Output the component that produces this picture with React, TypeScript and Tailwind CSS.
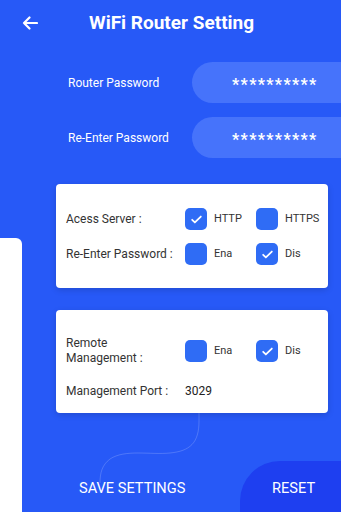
import { type ReactNode } from 'react'

const font = { fontFamily: 'Roboto, "Liberation Sans", sans-serif' }

function Box({ checked }: { checked?: boolean }) {
  return (
    <span className="flex h-[22px] w-[22px] shrink-0 items-center justify-center rounded-[5px] bg-[#2f6cf5]">
      {checked && (
        <svg width="13" height="13" viewBox="0 0 24 24" fill="none" stroke="white" strokeWidth="3.2" strokeLinecap="round" strokeLinejoin="round">
          <path d="M4 12.5l5 5L20 6.5" />
        </svg>
      )}
    </span>
  )
}

function Option({ checked, label }: { checked?: boolean; label: string }) {
  return (
    <div className="flex w-[71px] items-center gap-[7px]">
      <Box checked={checked} />
      <span className="text-[11px] text-[#333]">{label}</span>
    </div>
  )
}

function Row({ label, children }: { label: ReactNode; children: ReactNode }) {
  return (
    <div className="flex items-center">
      <div className="w-[119px] text-[12px] leading-[15px] text-[#333]">{label}</div>
      {children}
    </div>
  )
}

function PasswordRow({ label }: { label: string }) {
  return (
    <div className="flex h-[41px] items-center">
      <span className="w-[124px] pl-[68px] text-[12px] whitespace-nowrap text-white">{label}</span>
      <div className="ml-auto flex h-full w-[149px] items-center rounded-l-full bg-[#4673fb] pt-[4px] pl-[40px] text-[16px] font-bold tracking-[1.3px] text-white">
        **********
      </div>
    </div>
  )
}

export default function App() {
  return (
    <div className="relative flex h-[512px] w-[341px] flex-col overflow-hidden bg-[#2759f7]" style={font}>
      {/* panel peeking in from the left */}
      <div className="absolute top-[238px] bottom-0 left-0 w-[22px] rounded-tr-[6px] bg-white" />
      <svg className="absolute top-[413px] left-0" width="341" height="80" fill="none">
        <path d="M199 0 V8 C199 30 190 38 170 40 C150 42 125 36 110 46 C102 52 100 60 100 70" stroke="rgba(255,255,255,0.18)" strokeWidth="1" />
      </svg>

      <header className="relative flex h-[44px] items-center pt-[2px]">
        <svg className="ml-[22px]" width="16" height="14" viewBox="0 0 16 14" fill="none" stroke="white" strokeWidth="2.2" strokeLinecap="round" strokeLinejoin="round">
          <path d="M15 7H2M7.5 1.5L2 7l5.5 5.5" />
        </svg>
        <h1 className="ml-[51px] text-[19px] font-bold text-white">WiFi Router Setting</h1>
      </header>

      <div className="relative mt-[18px] flex flex-col gap-[14px]">
        <PasswordRow label="Router Password" />
        <PasswordRow label="Re-Enter Password" />
      </div>

      <section className="relative mt-[26px] mr-[13px] ml-[56px] flex h-[104px] flex-col gap-[13px] rounded-[4px] bg-white pt-[24px] pl-[10px] shadow-[0_2px_6px_rgba(0,0,0,0.15)]">
        <Row label="Acess Server :">
          <Option checked label="HTTP" />
          <Option label="HTTPS" />
        </Row>
        <Row label="Re-Enter Password :">
          <Option label="Ena" />
          <Option checked label="Dis" />
        </Row>
      </section>

      <section className="relative mt-[22px] mr-[13px] ml-[56px] flex h-[103px] flex-col gap-[16px] rounded-[4px] bg-white pt-[26px] pl-[10px] shadow-[0_2px_6px_rgba(0,0,0,0.15)]">
        <Row label={<>Remote<br />Management :</>}>
          <Option label="Ena" />
          <Option checked label="Dis" />
        </Row>
        <Row label="Management Port :">
          <span className="text-[12px] text-[#222]">3029</span>
        </Row>
      </section>

      <footer className="relative mt-auto flex h-[51px] items-stretch">
        <button className="flex-1 pt-[4px] pl-[79px] text-left text-[14.6px] text-white">SAVE SETTINGS</button>
        <button className="w-[101px] rounded-tl-[40px] bg-[#1e3ff0] pt-[4px] pl-[32px] text-left text-[14.6px] text-white">RESET</button>
      </footer>
    </div>
  )
}
